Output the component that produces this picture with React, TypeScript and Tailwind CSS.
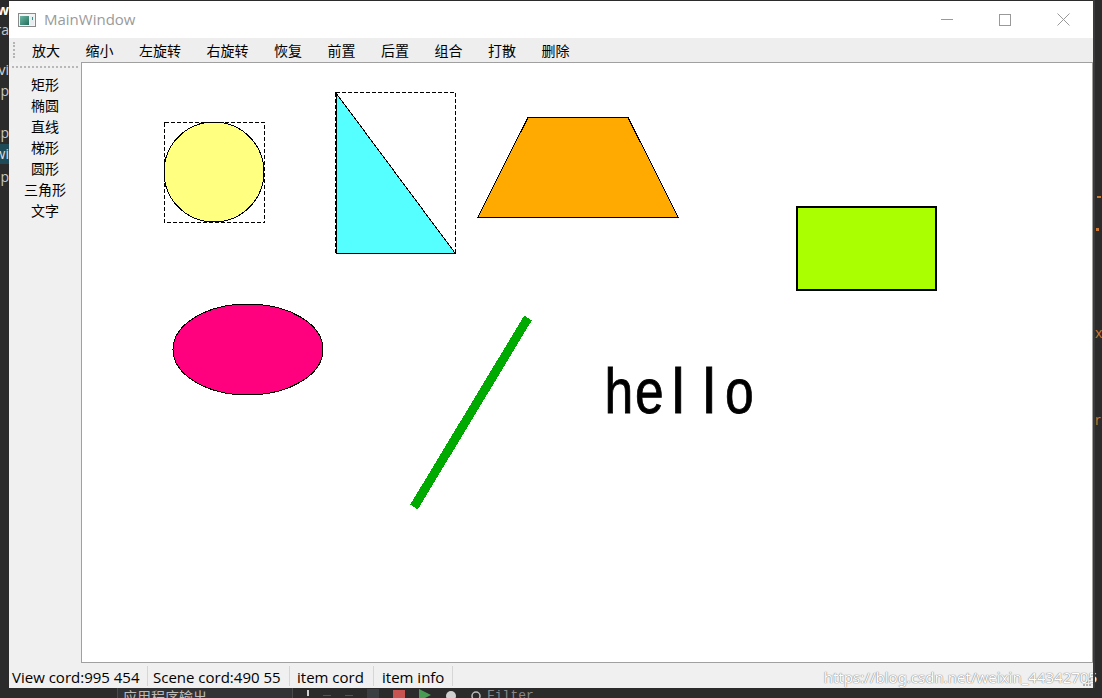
import React from 'react';

const menuItems = ['放大', '缩小', '左旋转', '右旋转', '恢复', '前置', '后置', '组合', '打散', '删除'];
const toolItems = ['矩形', '椭圆', '直线', '梯形', '圆形', '三角形', '文字'];

// bits of the IDE that peek out left of the window
const leftBits = [
  { top: 1, text: 'w', cls: 'text-white font-bold' },
  { top: 21, text: 'ra', cls: 'text-[#c8c8c8]' },
  { top: 61, text: 'vi', cls: 'text-[#d8d8d8]' },
  { top: 82, text: 'p', cls: 'text-[#c8c8c8]' },
  { top: 124, text: 'cp', cls: 'text-[#c8c8c8]' },
  { top: 145, text: 'wi', cls: 'text-[#e0e0e0]' },
  { top: 168, text: 'p', cls: 'text-[#c8c8c8]' },
];

function AppIcon() {
  return (
    <svg width="18" height="14" viewBox="0 0 18 14">
      <defs>
        <linearGradient id="ig" x1="0" y1="0" x2="1" y2="1">
          <stop offset="0" stopColor="#6fb6a6" />
          <stop offset="1" stopColor="#1f6f5a" />
        </linearGradient>
      </defs>
      <rect x="0.5" y="0.5" width="17" height="13" fill="#f4f4f4" stroke="#8a8a8a" />
      <rect x="2" y="3" width="9" height="9" fill="url(#ig)" />
      <rect x="12" y="3" width="4" height="9" fill="#e8eef0" />
      <rect x="14" y="4" width="1" height="3" fill="#3b8f8a" />
    </svg>
  );
}

function Canvas() {
  return (
    <svg className="absolute left-0 top-0" width="1010" height="599" viewBox="82 63 1010 599">
      {/* circle with selection box */}
      <circle cx="214" cy="172" r="50" fill="#ffff80" stroke="#000" strokeWidth="1" shapeRendering="crispEdges" />
      <rect x="164.5" y="122.5" width="100" height="100" fill="none" stroke="#000" strokeDasharray="4 2" shapeRendering="crispEdges" />

      {/* triangle with selection box */}
      <polygon points="336,93 336,253 455,253" fill="#55ffff" stroke="#000" strokeWidth="1" shapeRendering="crispEdges" />
      <rect x="335.5" y="92.5" width="120" height="161" fill="none" stroke="#000" strokeDasharray="4 2" shapeRendering="crispEdges" />

      {/* trapezoid */}
      <polygon points="528,117.5 628,117.5 678,217 478,217" fill="#ffaa00" stroke="#000" strokeWidth="1" shapeRendering="crispEdges" />

      {/* rectangle */}
      <rect x="796.5" y="206.5" width="139" height="83" fill="#aaff00" stroke="#000" strokeWidth="2" shapeRendering="crispEdges" />

      {/* ellipse */}
      <ellipse cx="248" cy="349.5" rx="75" ry="45.5" fill="#ff007f" stroke="#000" strokeWidth="1" shapeRendering="crispEdges" />

      {/* line */}
      <line x1="528" y1="318" x2="414" y2="507" stroke="#00aa00" strokeWidth="9" shapeRendering="crispEdges" />

      {/* text item */}
      <g fontFamily="'Liberation Sans', Arial, sans-serif" fontSize="63" fill="#000" stroke="#000" strokeWidth="0.8">
        <text transform="translate(604.5 413) scale(0.82 1)">h</text>
        <text transform="translate(635 413) scale(0.82 1)">e</text>
        <text transform="translate(671.5 413) scale(0.95 1)">l</text>
        <text transform="translate(702.5 413) scale(0.95 1)">l</text>
        <text transform="translate(725 413) scale(0.82 1)">o</text>
      </g>
    </svg>
  );
}

export default function App() {
  return (
    <div className="w-[1102px] h-[698px] overflow-hidden bg-[#2b2b2b] flex flex-col font-['Open_Sans',sans-serif]">
      <div className="flex h-[688px]">
        {/* IDE behind, left */}
        <div className="relative w-[9px] h-full overflow-hidden text-[14px] leading-[18px]">
          <div className="absolute left-0 top-[144px] w-[9px] h-[20px] bg-[#1d4b57]" />
          {leftBits.map((b, i) => (
            <div key={i} className={`absolute right-0 whitespace-nowrap ${b.cls}`} style={{ top: b.top }}>
              {b.text}
            </div>
          ))}
        </div>

        {/* main window */}
        <div className="w-[1084px] mt-[1px] flex flex-col bg-[#f0f0f0]">
          {/* title bar */}
          <div className="h-[37px] bg-white flex items-center">
            <div className="pl-[9px] pt-[1px] flex items-center">
              <AppIcon />
            </div>
            <span className="ml-[8px] text-[15px] text-[#9a9a9a] leading-none">MainWindow</span>
            <div className="ml-auto flex h-full mr-[1px]">
              <div className="w-[58px] h-full flex items-center justify-center">
                <svg width="12" height="12" viewBox="0 0 12 12">
                  <line x1="0" y1="5.5" x2="12" y2="5.5" stroke="#999" shapeRendering="crispEdges" />
                </svg>
              </div>
              <div className="w-[58px] h-full flex items-center justify-center">
                <svg width="12" height="12" viewBox="0 0 12 12">
                  <rect x="0.5" y="0.5" width="11" height="11" fill="none" stroke="#999" shapeRendering="crispEdges" />
                </svg>
              </div>
              <div className="w-[58px] h-full flex items-center justify-center">
                <svg width="13" height="13" viewBox="0 0 13 13">
                  <path d="M0.5 0.5 L12.5 12.5 M12.5 0.5 L0.5 12.5" stroke="#999" strokeWidth="1" />
                </svg>
              </div>
            </div>
          </div>

          {/* toolbar */}
          <div className="h-[24px] bg-[#eeeeee] flex items-center pl-[4px] font-['Noto_Sans_CJK_SC',sans-serif] text-[14px] text-black">
            <div className="w-[2px] h-[16px] border-l-2 border-dotted border-[#b4b4b4]" />
            <div className="ml-[17px] flex gap-[25.5px]">
              {menuItems.map((m) => (
                <span key={m} className="leading-[24px]">{m}</span>
              ))}
            </div>
          </div>

          {/* body */}
          <div className="flex h-[601px]">
            <div className="w-[72px] flex flex-col items-center pt-[4px] font-['Noto_Sans_CJK_SC',sans-serif] text-[14px] text-black">
              <div className="w-[66px] border-t-2 border-dotted border-[#b8b8b8]" />
              <div className="mt-[6px] flex flex-col items-center">
                {toolItems.map((t) => (
                  <span key={t} className="leading-[21px]">{t}</span>
                ))}
              </div>
            </div>
            <div className="relative flex-1 bg-white border border-[#a0a0a0]">
              <Canvas />
            </div>
          </div>

          {/* status bar */}
          <div className="relative h-[25px] flex items-start pl-[3px] text-[15px] text-black">
            <div className="mt-[3px] h-[20px] w-[136px] border-r border-[#d6d6d6] leading-[22px] whitespace-nowrap">View cord:995 454</div>
            <div className="mt-[3px] h-[20px] w-[142px] pl-[5px] border-r border-[#d6d6d6] leading-[22px] whitespace-nowrap">Scene cord:490 55</div>
            <div className="mt-[3px] h-[20px] w-[84px] pl-[7px] border-r border-[#d6d6d6] leading-[22px] whitespace-nowrap">item cord</div>
            <div className="mt-[3px] h-[20px] w-[79px] pl-[8px] border-r border-[#d6d6d6] leading-[22px] whitespace-nowrap">item info</div>
            <svg className="absolute right-[2px] bottom-[2px]" width="10" height="10" viewBox="0 0 10 10">
              <g fill="#b0b0b0">
                <rect x="8" y="2" width="2" height="2" />
                <rect x="5" y="5" width="2" height="2" />
                <rect x="8" y="5" width="2" height="2" />
                <rect x="2" y="8" width="2" height="2" />
                <rect x="5" y="8" width="2" height="2" />
                <rect x="8" y="8" width="2" height="2" />
              </g>
            </svg>
            <div className="absolute right-[-4px] top-[3px] text-[15px] leading-[22px] text-white font-['Noto_Sans',sans-serif] [text-shadow:0_0_1px_#7a7a7a,0_0_1px_#7a7a7a] whitespace-nowrap">
              https://blog.csdn.net/weixin_44342705
            </div>
          </div>
        </div>

        {/* IDE behind, right */}
        <div className="relative flex-1 h-full overflow-hidden border-l-2 border-[#3a3a3a] text-[14px] leading-[18px] text-[#cc7832]">
          <div className="absolute left-[2px] top-[196px] w-[4px] h-[2px] bg-[#cc7832]" />
          <div className="absolute left-[1px] top-[228px] w-[3px] h-[3px] bg-[#cc7832]" />
          <div className="absolute left-[0px] top-[324px]">x</div>
          <div className="absolute left-[0px] top-[411px]">r</div>
        </div>
      </div>

      {/* IDE behind, bottom */}
      <div className="h-[10px] flex items-start overflow-hidden text-[14px] leading-[18px]">
        <div className="w-[117px] h-full bg-[#2b2b2b]" />
        <div className="w-[176px] h-full bg-[#313335] border-l border-r border-[#4a4a4a] pl-[5px] text-[#bbbbbb] font-['Noto_Sans_CJK_SC',sans-serif]">
          <div className="-mt-[1px]">应用程序输出</div>
        </div>
        <div className="flex-1 h-full bg-[#2b2b2b] flex items-start pl-[14px] gap-[14px]">
          <div className="w-[2px] h-[6px] bg-[#d0d0d0] mt-[2px]" />
          <div className="w-[8px] h-[1px] bg-[#555] mt-[7px]" />
          <div className="w-[8px] h-[1px] bg-[#555] mt-[7px]" />
          <div className="w-[12px] h-[10px] bg-[#3c3f41] mt-[1px]" />
          <div className="w-[12px] h-[10px] bg-[#c75450] mt-[2px]" />
          <svg width="12" height="10" viewBox="0 0 12 10" className="mt-[1px]">
            <polygon points="0,0 12,6 0,12" fill="#499c54" />
          </svg>
          <svg width="12" height="10" viewBox="0 0 12 10" className="mt-[1px]">
            <circle cx="6" cy="7" r="5" fill="#d0d0d0" />
          </svg>
          <div className="flex items-start gap-[6px] text-[#888] font-['Liberation_Mono',monospace] text-[13px]">
            <svg width="10" height="10" viewBox="0 0 10 10" className="mt-[2px]">
              <circle cx="5" cy="6" r="4" fill="none" stroke="#bbb" strokeWidth="1.5" />
            </svg>
            <span className="-mt-[1px]">Filter</span>
          </div>
        </div>
      </div>
    </div>
  );
}
